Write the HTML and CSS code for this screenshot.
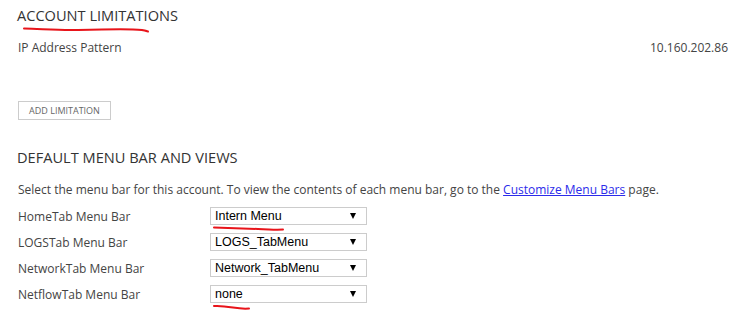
FILE: index.html
```html
<!DOCTYPE html>
<html lang="en">
<head>
  <meta charset="UTF-8" />
  <meta name="viewport" content="width=device-width, initial-scale=1.0" />
  <title>Account settings</title>
  <link rel="stylesheet" href="styles.css">
</head>
<body>
  <div class="page">

    <!-- Account limitations -->
    <section class="limits">
      <h2 class="section-title marked">
        ACCOUNT LIMITATIONS
        <svg class="scribble scribble-title" width="128" height="8" viewBox="0 0 128 8">
          <path d="M1 2.5 C 20 3, 35 4.5, 55 4 S 95 3, 110 3.5 S 122 5, 125 5.5" />
        </svg>
      </h2>
      <div class="limit-row">
        <span>IP Address Pattern</span>
        <span>10.160.202.86</span>
      </div>
      <button class="btn-small" type="button">Add Limitation</button>
    </section>

    <!-- Default menu bars -->
    <section class="menus">
      <h2 class="section-title">DEFAULT MENU BAR AND VIEWS</h2>
      <p class="hint">Select the menu bar for this account. To view the contents of each menu bar, go to the <a href="#">Customize Menu Bars</a> page.</p>

      <div class="menu-grid">
        <label>HomeTab Menu Bar</label>
        <div class="fake-select">
          <span>Intern Menu</span><span class="arrow"></span>
          <svg class="scribble scribble-field" width="72" height="6" viewBox="0 0 72 6">
            <path d="M1 1.5 C 15 2, 30 2.5, 45 3 S 62 4, 70 3.5" />
          </svg>
        </div>

        <label>LOGSTab Menu Bar</label>
        <div class="fake-select"><span>LOGS_TabMenu</span><span class="arrow"></span></div>

        <label>NetworkTab Menu Bar</label>
        <div class="fake-select"><span>Network_TabMenu</span><span class="arrow"></span></div>

        <label>NetflowTab Menu Bar</label>
        <div class="fake-select">
          <span>none</span><span class="arrow"></span>
          <svg class="scribble scribble-field" width="38" height="6" viewBox="0 0 38 6">
            <path d="M1 2 C 8 1.5, 14 2.5, 20 3.5 S 30 5, 36 4.5" />
          </svg>
        </div>
      </div>
    </section>

  </div>
</body>
</html>
```

FILE: styles.css
```css
body {
  margin: 0;
  background: #fff;
  font-family: "Open Sans", Arial, sans-serif;
  font-size: 12px;
  color: #444;
}
.page {
  padding: 5px 15px 20px 17px;
}
.section-title {
  margin: 0;
  font-size: 14.6px;
  font-weight: normal;
  line-height: 20px;
  color: #333;
}
.marked {
  position: relative;
}
.scribble {
  position: absolute;
  overflow: visible;
}
.scribble path {
  fill: none;
  stroke: #e8141a;
  stroke-width: 2;
  stroke-linecap: round;
}
.scribble-title {
  left: 6px;
  top: 21px;
}
.limit-row {
  display: flex;
  justify-content: space-between;
  margin: 14px 0 0 1px;
  line-height: 18px;
}
.btn-small {
  display: block;
  margin: 44px 0 0 1px;
  width: 93px;
  height: 19px;
  padding: 0;
  background: #fff;
  border: 1px solid #ccc;
  font-family: "Open Sans", Arial, sans-serif;
  font-size: 9px;
  text-transform: uppercase;
  color: #666;
}
.menus .section-title {
  margin-top: 27px;
}
.hint {
  margin: 14px 0 0 1px;
  line-height: 18px;
}
.hint a {
  color: #2b2bea;
}
.menu-grid {
  display: grid;
  grid-template-columns: 192px 157px;
  row-gap: 8px;
  align-items: center;
  margin: 8px 0 0 1px;
}
.fake-select {
  position: relative;
  display: flex;
  justify-content: space-between;
  align-items: center;
  height: 18px;
  box-sizing: border-box;
  padding: 0 10px 0 4px;
  border: 1px solid #ccc;
  font-family: "Liberation Sans", Arial, sans-serif;
  font-size: 12.5px;
  color: #000;
}
.arrow {
  width: 0;
  height: 0;
  border-left: 3px solid transparent;
  border-right: 3px solid transparent;
  border-top: 6px solid #000;
}
.scribble-field {
  left: 2px;
  top: 18px;
}
```
